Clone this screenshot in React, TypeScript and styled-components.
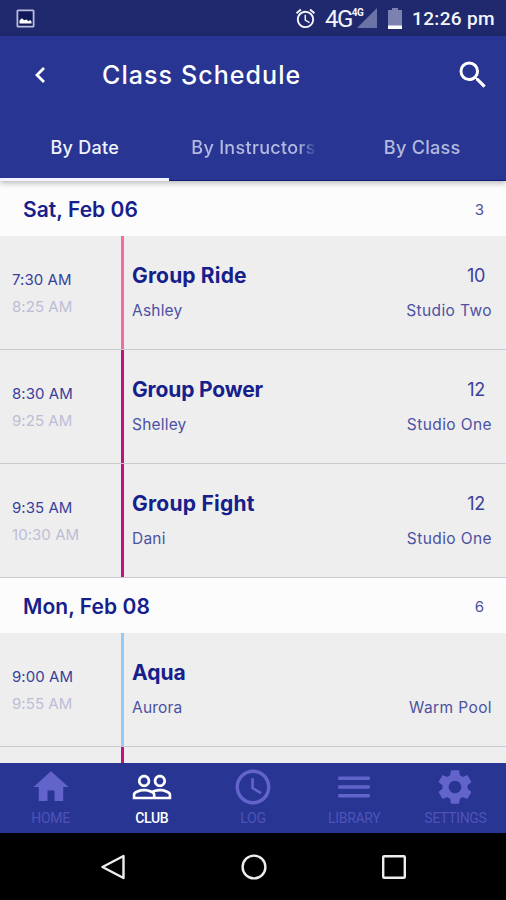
import React from "react";
import styled, { createGlobalStyle } from "styled-components";
import {
  MdAccessTime,
  MdAlarm,
  MdHome,
  MdMenu,
  MdPeopleOutline,
  MdSearch,
  MdSettings,
} from "react-icons/md";

const GlobalStyle = createGlobalStyle`
  * { box-sizing: border-box; }
  body { margin: 0; background: #000; }
`;

const Screen = styled.div`
  display: flex;
  flex-direction: column;
  width: 506px;
  height: 900px;
  overflow: hidden;
  font-family: Inter, "Liberation Sans", sans-serif;
  color: #16208a;
  white-space: nowrap;
`;

const StatusBar = styled.div`
  display: flex;
  flex: none;
  align-items: center;
  height: 36px;
  padding: 0 11px 0 16px;
  background: #20296e;
  color: #f4f5fb;
  font-family: Roboto, sans-serif;
`;

const StatusIcons = styled.div`
  display: flex;
  align-items: center;
  margin-left: auto;
`;

const Network = styled.span`
  display: flex;
  width: 52px;
  height: 24px;
  margin-left: 8px;
  font-size: 24px;
  line-height: 26px;
  letter-spacing: -1.6px;
`;

const NetworkBadge = styled.sup`
  position: relative;
  z-index: 1;
  width: 12px;
  font-size: 10px;
  font-weight: 700;
  line-height: 14px;
  letter-spacing: -0.4px;
`;

const SignalIcon = styled.svg`
  flex: none;
  width: 20px;
  height: 20px;
  margin: 2px 0 0 -7px;
`;

const BatteryIcon = styled.svg`
  width: 14px;
  height: 21px;
  margin-left: 11px;
`;

const Clock = styled.span`
  width: 83px;
  margin-left: 10px;
  font-size: 19px;
  font-weight: 500;
  letter-spacing: 0.35px;
  line-height: 24px;
  padding-top: 2px;
`;

const AppBar = styled.header`
  position: relative;
  z-index: 1;
  flex: none;
  height: 145px;
  background: #283593;
  box-shadow: 0 2px 6px rgba(0, 0, 0, 0.28);
`;

const TitleRow = styled.div`
  display: flex;
  align-items: center;
  height: 78px;
  padding: 0 15px 0 33px;
  color: #fff;
`;

const BackIcon = styled.svg`
  width: 14px;
  height: 18px;
`;

const Title = styled.h1`
  margin: 0 auto 0 55px;
  font-size: 25px;
  font-weight: 500;
  letter-spacing: 1.08px;
`;

const Tabs = styled.nav`
  display: grid;
  grid-template-columns: repeat(3, 1fr);
  height: 67px;
`;

const Tab = styled.div<{ $active?: boolean }>`
  display: flex;
  justify-content: center;
  padding: 22px 0 0 1px;
  box-shadow: inset 0 ${(p) => (p.$active ? "-3px #f2f3ff" : "-1px #101c78")};
  color: ${(p) => (p.$active ? "#f1f3ff" : "#b3badf")};
  font-size: 18px;
  font-weight: 500;
  line-height: 24px;
`;

const TabLabel = styled.span<{ $faded?: boolean }>`
  letter-spacing: 0.3px;
  mask-image: ${(p) =>
    p.$faded ? "linear-gradient(to right, #000 86%, transparent 101%)" : "none"};
`;

const Schedule = styled.main`
  flex: 1;
  min-height: 0;
  overflow: hidden;
  background: #eee;
`;

const DayHeader = styled.div`
  display: flex;
  align-items: center;
  justify-content: space-between;
  height: 55px;
  padding: 2px 22px 0 23px;
  background: #fcfcfc;
`;

const DayName = styled.h2`
  margin: 0;
  font-size: 21px;
  font-weight: 600;
  letter-spacing: 0.05px;
`;

const DayCount = styled.span`
  font-size: 15px;
  color: #4c51a2;
`;

const ClassRow = styled.div`
  display: grid;
  grid-template-columns: 121px 3px 1fr auto;
  height: 114px;
  border-bottom: 1px solid #c9cacf;
`;

const Times = styled.div`
  padding: 30px 0 0 12px;
  font-size: 15px;
  line-height: 27px;
  letter-spacing: 0.05px;
`;

const StartTime = styled.div`
  color: #3a409b;
`;

const EndTime = styled.div`
  color: #bdbdd6;
`;

const CategoryBar = styled.div<{ $color: string }>`
  background: ${(p) => p.$color};
`;

const Details = styled.div`
  padding: 26px 0 0 8px;
`;

const ClassName = styled.h3<{ $spacing: number }>`
  margin: 0;
  font-size: 21px;
  font-weight: 700;
  line-height: 28px;
  letter-spacing: ${(p) => p.$spacing}px;
`;

const Subtext = styled.div<{ $spacing?: number }>`
  margin-top: 8px;
  font-size: 15.5px;
  line-height: 26px;
  letter-spacing: ${(p) => p.$spacing ?? 0.2}px;
  color: #4c51a2;
`;

const Location = styled.div`
  padding: 26px 14px 0 0;
  text-align: right;
`;

const Spots = styled.div`
  padding-right: 7px;
  font-size: 18px;
  line-height: 28px;
  letter-spacing: -0.3px;
  color: #3a409b;
`;

const BottomTabs = styled.nav`
  display: grid;
  flex: none;
  grid-template-columns: repeat(5, 1fr);
  height: 70px;
  background: #283593;
`;

const BottomTab = styled.div<{ $active?: boolean }>`
  display: flex;
  flex-direction: column;
  align-items: center;
  padding-top: 3px;
  color: ${(p) => (p.$active ? "#fff" : "#6264cb")};
`;

const BottomLabel = styled.span<{ $active?: boolean }>`
  font-family: Roboto, sans-serif;
  font-size: 14px;
  line-height: 21px;
  font-weight: ${(p) => (p.$active ? 500 : 400)};
  color: ${(p) => (p.$active ? "#fff" : "#4f53b9")};
  letter-spacing: -0.3px;
`;

const SystemNav = styled.div`
  display: flex;
  flex: none;
  align-items: center;
  justify-content: space-between;
  height: 67px;
  padding: 0 99px 0 100px;
  background: #000;
`;

const NavIcon = styled.svg`
  width: 26px;
  height: 26px;
  fill: none;
  stroke: #eee;
  stroke-width: 2.4;
  stroke-linejoin: round;
`;

const PINK = "#f768a4";
const MAGENTA = "#bf127f";
const BLUE = "#90caf9";

type Session = {
  start: string;
  end: string;
  name: string;
  instructor: string;
  spots?: string;
  room: string;
  color: string;
  spacing?: number;
};

const days: { name: string; count: string; sessions: Session[] }[] = [
  {
    name: "Sat, Feb 06",
    count: "3",
    sessions: [
      { start: "7:30 AM", end: "8:25 AM", name: "Group Ride", instructor: "Ashley", spots: "10", room: "Studio Two", color: PINK, spacing: 0.15 },
      { start: "8:30 AM", end: "9:25 AM", name: "Group Power", instructor: "Shelley", spots: "12", room: "Studio One", color: MAGENTA, spacing: -0.15 },
      { start: "9:35 AM", end: "10:30 AM", name: "Group Fight", instructor: "Dani", spots: "12", room: "Studio One", color: MAGENTA, spacing: 0.25 },
    ],
  },
  {
    name: "Mon, Feb 08",
    count: "6",
    sessions: [
      { start: "9:00 AM", end: "9:55 AM", name: "Aqua", instructor: "Aurora", room: "Warm Pool", color: BLUE },
      { start: "", end: "", name: "", instructor: "", room: "", color: MAGENTA },
    ],
  },
];

const bottomTabs = [
  { label: "HOME", Icon: MdHome },
  { label: "CLUB", Icon: MdPeopleOutline, active: true },
  { label: "LOG", Icon: MdAccessTime },
  { label: "LIBRARY", Icon: MdMenu },
  { label: "SETTINGS", Icon: MdSettings },
];

export default function App() {
  return (
    <Screen>
      <GlobalStyle />
      <StatusBar>
        <svg width="19" height="19" viewBox="0 0 19 19">
          <rect x="1.4" y="1.4" width="16.2" height="16.2" rx="0.6" fill="#111958" stroke="#b9bddb" strokeWidth="1.8" />
          <path d="M3.5 14.6v-3.2l2.3-2.1 2.4 2 2.2-.7 2.1 1.6 1.6-1.1 1.4 1.4v2.1z" fill="#fff" />
        </svg>
        <StatusIcons>
          <MdAlarm size={23} />
          <Network>
            4G
            <NetworkBadge>4G</NetworkBadge>
            <SignalIcon viewBox="0 0 20 20">
              <path d="M20 0v20H0z" fill="#6b72a6" />
            </SignalIcon>
          </Network>
          <BatteryIcon viewBox="0 0 14 21">
            <path d="M4 0h6v2h4v19H0V2h4z" fill="#7c82b0" />
            <path d="M0 17.5h14V21H0z" fill="#fff" />
          </BatteryIcon>
          <Clock>12:26 pm</Clock>
        </StatusIcons>
      </StatusBar>
      <AppBar>
        <TitleRow>
          <BackIcon viewBox="0 0 14 18">
            <path d="M11 2L4 9l7 7" fill="none" stroke="#fff" strokeWidth="2.8" />
          </BackIcon>
          <Title>Class Schedule</Title>
          <MdSearch size={36} />
        </TitleRow>
        <Tabs>
          <Tab $active>
            <TabLabel>By Date</TabLabel>
          </Tab>
          <Tab>
            <TabLabel $faded>By Instructors</TabLabel>
          </Tab>
          <Tab>
            <TabLabel>By Class</TabLabel>
          </Tab>
        </Tabs>
      </AppBar>
      <Schedule>
        {days.map((day) => (
          <section key={day.name}>
            <DayHeader>
              <DayName>{day.name}</DayName>
              <DayCount>{day.count}</DayCount>
            </DayHeader>
            {day.sessions.map((s, i) => (
              <ClassRow key={i}>
                <Times>
                  <StartTime>{s.start}</StartTime>
                  <EndTime>{s.end}</EndTime>
                </Times>
                <CategoryBar $color={s.color} />
                <Details>
                  <ClassName $spacing={s.spacing ?? 0}>{s.name}</ClassName>
                  <Subtext>{s.instructor}</Subtext>
                </Details>
                <Location>
                  <Spots>{s.spots ?? "\u00a0"}</Spots>
                  <Subtext $spacing={0.4}>{s.room}</Subtext>
                </Location>
              </ClassRow>
            ))}
          </section>
        ))}
      </Schedule>
      <BottomTabs>
        {bottomTabs.map(({ label, Icon, active }) => (
          <BottomTab key={label} $active={active}>
            <Icon size={42} />
            <BottomLabel $active={active}>{label}</BottomLabel>
          </BottomTab>
        ))}
      </BottomTabs>
      <SystemNav>
        <NavIcon viewBox="0 0 26 26">
          <path d="M23.5 2v22L2.5 13z" />
        </NavIcon>
        <NavIcon viewBox="0 0 26 26">
          <circle cx="13" cy="13" r="11.4" />
        </NavIcon>
        <NavIcon viewBox="0 0 26 26">
          <rect x="2.2" y="2.2" width="21.6" height="21.6" rx="1" />
        </NavIcon>
      </SystemNav>
    </Screen>
  );
}
